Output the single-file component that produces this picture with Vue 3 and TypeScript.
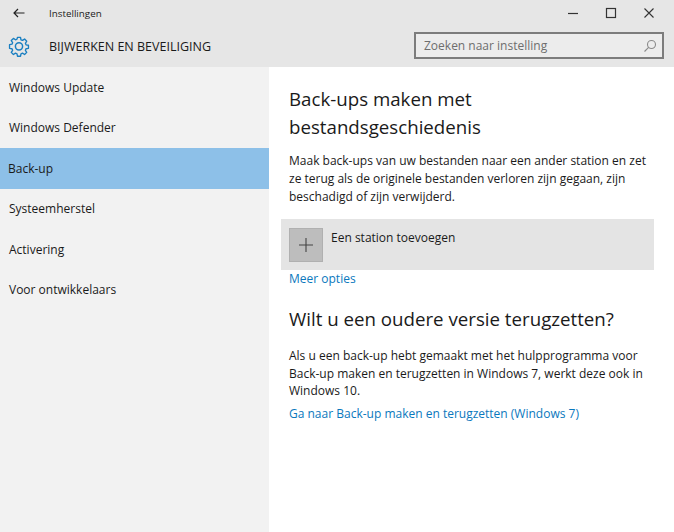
<script setup lang="ts">
const navItems = [
  { label: 'Windows Update' },
  { label: 'Windows Defender' },
  { label: 'Back-up', active: true },
  { label: 'Systeemherstel' },
  { label: 'Activering' },
  { label: 'Voor ontwikkelaars' },
]
</script>

<template>
  <div class="window">
    <header class="header">
      <div class="titlebar">
        <svg class="back" width="12" height="10" viewBox="0 0 12 10" fill="none" stroke="#222" stroke-width="1.2">
          <path d="M11.5 5H1M5 1 1 5l4 4" />
        </svg>
        <span class="app-name">Instellingen</span>
        <div class="controls">
          <svg width="12" height="12" viewBox="0 0 12 12" fill="none" stroke="#333" stroke-width="1.2"><path d="M1 6.5h10" /></svg>
          <svg width="12" height="12" viewBox="0 0 12 12" fill="none" stroke="#333" stroke-width="1.2"><rect x="1.5" y="1.5" width="9" height="9" /></svg>
          <svg width="12" height="12" viewBox="0 0 12 12" fill="none" stroke="#333" stroke-width="1.1"><path d="m1.5 1.5 9 9m0-9-9 9" /></svg>
        </div>
      </div>
      <div class="subbar">
        <svg class="gear" width="22" height="22" viewBox="0 0 22 22" fill="none" stroke="#1a7fc1" stroke-width="1.5" stroke-linejoin="round">
          <path d="M9.3 1.5h3.4l.5 2.7 1.7.7 2.3-1.5 2.4 2.4-1.5 2.3.7 1.7 2.7.5v3.4l-2.7.5-.7 1.7 1.5 2.3-2.4 2.4-2.3-1.5-1.7.7-.5 2.7H9.3l-.5-2.7-1.7-.7-2.3 1.5-2.4-2.4 1.5-2.3-.7-1.7-2.7-.5V9.6l2.7-.5.7-1.7-1.5-2.3 2.4-2.4 2.3 1.5 1.7-.7z" transform="translate(1.1 1) scale(.9)" />
          <circle cx="11" cy="11.3" r="3.6" />
        </svg>
        <h1 class="section">BIJWERKEN EN BEVEILIGING</h1>
        <div class="search">
          <span>Zoeken naar instelling</span>
          <svg width="14" height="14" viewBox="0 0 14 14" fill="none" stroke="#8a8a8a" stroke-width="1.1">
            <circle cx="8.5" cy="5.5" r="4" />
            <path d="M5.6 8.4 1.5 12.5" />
          </svg>
        </div>
      </div>
    </header>

    <div class="body">
      <nav class="sidebar">
        <div v-for="item in navItems" :key="item.label" class="nav-item" :class="{ active: item.active }">
          {{ item.label }}
        </div>
      </nav>

      <main class="content">
        <h2 class="heading first">Back-ups maken met<br />bestandsgeschiedenis</h2>
        <p class="text intro">
          Maak back-ups van uw bestanden naar een ander station en zet<br />
          ze terug als de originele bestanden verloren zijn gegaan, zijn<br />
          beschadigd of zijn verwijderd.
        </p>
        <div class="add-row">
          <div class="add-tile">
            <svg width="16" height="16" viewBox="0 0 16 16" fill="none" stroke="#444" stroke-width="1.1"><path d="M8 1v14M1 8h14" /></svg>
          </div>
          <span class="add-label">Een station toevoegen</span>
        </div>
        <a class="link">Meer opties</a>
        <h2 class="heading second">Wilt u een oudere versie terugzetten?</h2>
        <p class="text outro">
          Als u een back-up hebt gemaakt met het hulpprogramma voor<br />
          Back-up maken en terugzetten in Windows 7, werkt deze ook in<br />
          Windows 10.
        </p>
        <a class="link last">Ga naar Back-up maken en terugzetten (Windows 7)</a>
      </main>
    </div>
  </div>
</template>

<style scoped>
.window {
  display: flex;
  flex-direction: column;
  width: 674px;
  height: 532px;
  overflow: hidden;
  background: #fff;
  color: #1a1a1a;
  font-family: "Open Sans", "Noto Sans", sans-serif;
}

.header {
  flex: none;
  height: 67px;
  background: #e6e6e6;
}

.titlebar {
  display: flex;
  align-items: center;
  height: 26px;
  padding: 0 19px 0 13px;
}

.back {
  margin-right: 24px;
}

.app-name {
  font-size: 9.8px;
}

.controls {
  display: flex;
  gap: 26px;
  margin-left: auto;
}

.subbar {
  display: flex;
  align-items: center;
  height: 41px;
  padding: 0 10px 0 8px;
}

.gear {
  margin-top: -2px;
  margin-right: 19px;
}

.section {
  margin: 0;
  font-size: 12.5px;
  font-weight: 400;
}

.search {
  display: flex;
  align-items: center;
  justify-content: space-between;
  box-sizing: border-box;
  width: 250px;
  height: 27px;
  margin-top: -2px;
  margin-left: auto;
  padding: 0 5px 0 8px;
  border: 2px solid #7c7c7c;
  background: #ececec;
  color: #6e6e6e;
  font-size: 12px;
}

.body {
  display: flex;
  flex: 1;
}

.sidebar {
  flex: none;
  width: 269px;
  background: #f2f2f2;
}

.nav-item {
  display: flex;
  align-items: center;
  box-sizing: border-box;
  height: 40.5px;
  padding-left: 9px;
  font-size: 12px;
}

.nav-item.active {
  padding-left: 8px;
  background: #8dc0e8;
}

.content {
  flex: 1;
  padding: 0 20px;
}

.heading {
  margin: 0;
  font-size: 18.7px;
  font-weight: 400;
  line-height: 28px;
}

.heading.first {
  margin-top: 18px;
}

.heading.second {
  margin-top: 17px;
}

.text {
  margin: 0;
  font-size: 12px;
  white-space: nowrap;
}

.intro {
  margin-top: 11px;
  line-height: 18px;
}

.outro {
  margin-top: 14px;
  line-height: 17.5px;
}

.add-row {
  display: flex;
  align-items: flex-start;
  box-sizing: border-box;
  width: 373px;
  height: 51px;
  margin: 13px 0 0 -8px;
  padding: 9px 8px;
  background: #e4e4e4;
  font-size: 12px;
}

.add-tile {
  display: flex;
  align-items: center;
  justify-content: center;
  width: 34px;
  height: 34px;
  background: #bdbdbd;
  box-shadow: inset 0 0 0 1px #b0b0b0;
}

.add-label {
  margin: 1px 0 0 8px;
}

.link {
  display: block;
  color: #0a78bd;
  font-size: 12px;
  line-height: 18px;
}

.last {
  margin-top: 5px;
}
</style>
